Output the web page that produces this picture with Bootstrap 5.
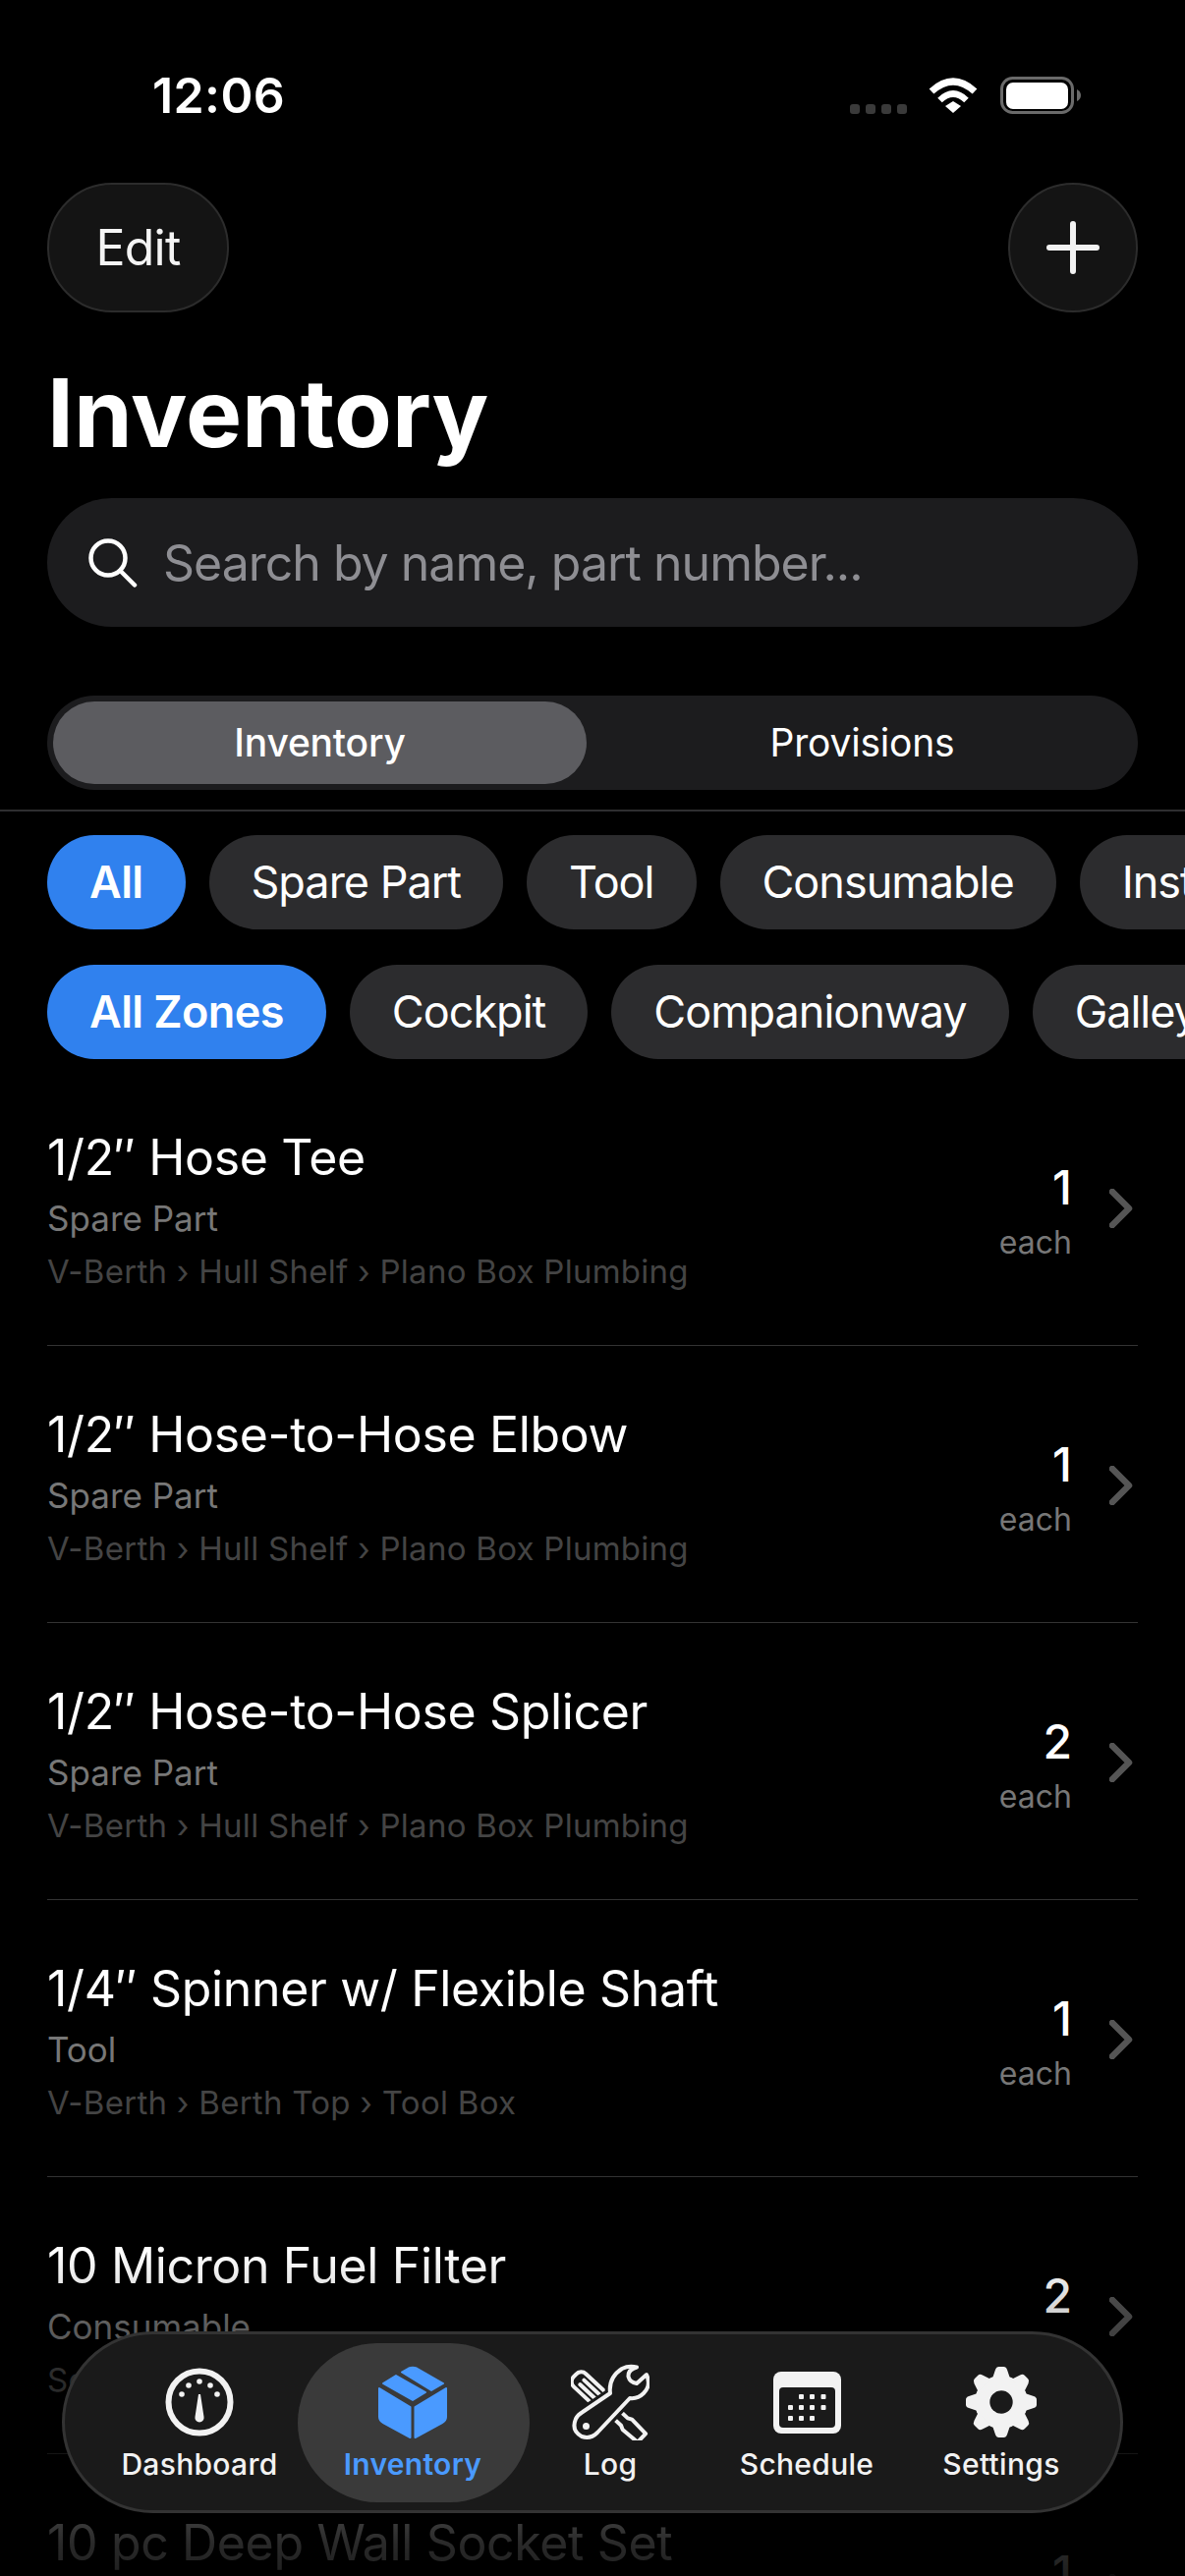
<!DOCTYPE html>
<html lang="en">
<head>
  <meta charset="UTF-8">
  <title>Inventory</title>
  <link href="https://cdn.jsdelivr.net/npm/bootstrap@5.3.0/dist/css/bootstrap.min.css" rel="stylesheet">
  <style>
    html, body { background: #000; margin: 0; }
    body { font-family: Inter, "Liberation Sans", sans-serif; color: #fff; }
    .phone { width: 1206px; height: 2622px; overflow: hidden; position: relative; background: #000; }

    /* status bar */
    .status-row { height: 186px; padding: 68px 106px 0 155px; }
    .status-time { font-size: 50px; font-weight: 600; line-height: 58px; letter-spacing: .4px; }
    .status-icons { padding-top: 10px; }
    .cell-dots { width: 58px; height: 10px; margin: 28px 22px 0 0; }
    .cell-dots span { width: 10px; height: 10px; border-radius: 3px; background: #3a3a3a; }
    .wifi-icon { width: 50px; height: 37px; margin-right: 23px; }
    .battery-icon { width: 82px; height: 38px; }

    /* header */
    .page-pad { padding-left: 48px; padding-right: 48px; }
    .nav-row { height: 132px; }
    .glass-btn { height: 132px; width: 185px; background: #141414; border: 2px solid #2c2c2c; color: #f4f4f4; font-size: 50px; line-height: 1; padding: 0; letter-spacing: -.8px; }
    .glass-btn:hover { background: #141414; color: #f4f4f4; border-color: #2c2c2c; }
    .plus-btn { width: 132px; padding: 0; }
    .plus-btn svg { width: 54px; height: 54px; }
    .page-title { font-size: 96px; font-weight: 700; line-height: 116px; margin: 44px 0 0; color: #fff; }

    .search-box { height: 131px; margin-top: 29px; background: #1c1c1e; padding-left: 42px; }
    .search-box svg { width: 50px; height: 50px; margin-right: 26px; }
    .search-box input { background: transparent; border: 0; outline: 0; padding: 0; width: 900px; color: #fff; font-size: 50px; line-height: 60px; letter-spacing: -1px; }
    .search-box input::placeholder { color: #8e8e93; opacity: 1; }

    .segment { height: 96px; margin-top: 70px; background: #1c1c1e; padding: 6px; }
    .segment-item { height: 84px; font-size: 39px; font-weight: 500; color: #fff; letter-spacing: -.2px; }
    .segment-on { width: 543px; background: #5c5c60; }
    .segment-off { flex: 1; padding-left: 6px; font-weight: 400; }

    .head-line { height: 2px; background: #2e2e30; margin-top: 20px; }

    /* filter chips */
    .chip-row { gap: 24px; margin-left: 48px; white-space: nowrap; overflow: hidden; }
    .chip-row-one { margin-top: 24px; }
    .chip-row-two { margin-top: 36px; }
    .chip { height: 96px; padding: 0 43px; background: #2c2c2e; font-size: 45px; color: #fff; flex: 0 0 auto; letter-spacing: -1px; }
    .chip-on { background: #3081ee; font-weight: 600; letter-spacing: -.6px; }

    /* inventory rows */
    .stock-list { margin-top: 10px; background: transparent; }
    .stock-row { background: transparent; color: #fff; height: 282px; padding: 60px 0 0; border: 0; border-bottom: 3px solid #333; border-radius: 0; }
    .stock-name { font-size: 50px; line-height: 60px; letter-spacing: -.35px; }
    .stock-type { font-size: 35px; line-height: 42px; color: #777; margin-top: 11px; }
    .stock-place { font-size: 33px; line-height: 38px; color: #444; margin-top: 14px; letter-spacing: .27px; }
    .stock-qty { text-align: right; margin-top: 32px; }
    .qty-num { font-size: 48px; line-height: 58px; font-weight: 500; }
    .qty-unit { font-size: 32px; line-height: 40px; color: #777; margin-top: 7px; }
    .chev { width: 24px; height: 40px; margin-left: 38px; margin-right: 5px; margin-top: 62px; }

    /* fade behind the tab bar */
    .bottom-fade { left: 0; right: 0; top: 2250px; bottom: 0; pointer-events: none; background: linear-gradient(to bottom, rgba(0,0,0,0) 0, rgba(0,0,0,0) 40px, rgba(0,0,0,.84) 340px, rgba(0,0,0,.88) 372px); }

    /* tab bar */
    .tab-bar { left: 63px; top: 2373px; width: 1080px; height: 185px; background: #1a1a1a; border: 3px solid #333; padding: 9px 0 0 37px; }
    .tab-item { height: 162px; padding-top: 21px; color: #f2f2f2; font-size: 30px; font-weight: 500; line-height: 36px; letter-spacing: .3px; }
    .tab-on { background: #3a3a3a; color: #4a9aff; font-weight: 600; }
    .tab-dash { width: 200px; }
    .tab-inv { width: 236px; padding-right: 2px; }
    .tab-log { width: 164px; }
    .tab-sched { width: 236px; }
    .tab-set { width: 160px; }
    .tab-icon { height: 78px; margin-bottom: 6px; }
  </style>
</head>
<body>
  <div class="phone">

    <!-- Status bar -->
    <div class="status-row d-flex justify-content-between align-items-start">
      <div class="status-time">12:06</div>
      <div class="status-icons d-flex align-items-start">
        <div class="cell-dots d-flex justify-content-between"><span></span><span></span><span></span><span></span></div>
        <svg class="wifi-icon" viewBox="0 0 50 37">
          <path d="M3 15 Q25 -5 47 15" fill="none" stroke="#fff" stroke-width="7"/>
          <path d="M11.5 24 Q25 11 38.5 24" fill="none" stroke="#fff" stroke-width="6.5"/>
          <path d="M17 30 L25 25 L33 30 L25 37 Z" fill="#fff"/>
        </svg>
        <svg class="battery-icon" viewBox="0 0 82 38">
          <rect x="1.5" y="1.5" width="72" height="35" rx="11" fill="none" stroke="#6a6a6a" stroke-width="3"/>
          <rect x="6" y="6" width="63" height="27" rx="7" fill="#fff"/>
          <path d="M78 13 Q82 15 82 19 Q82 23 78 25 Z" fill="#6a6a6a"/>
        </svg>
      </div>
    </div>

    <div class="page-pad">
      <div class="nav-row d-flex justify-content-between">
        <button class="btn glass-btn rounded-pill">Edit</button>
        <button class="btn glass-btn plus-btn rounded-circle d-flex align-items-center justify-content-center">
          <svg viewBox="0 0 54 54"><path d="M27 3V51M3 27H51" stroke="#f2f2f2" stroke-width="6" stroke-linecap="round"/></svg>
        </button>
      </div>

      <h1 class="page-title">Inventory</h1>

      <div class="search-box rounded-pill d-flex align-items-center">
        <svg viewBox="0 0 50 50" fill="none" stroke="#fff" stroke-width="4.5" stroke-linecap="round">
          <circle cx="20" cy="20" r="17.5"/><path d="M32.5 33 L47 47.5"/>
        </svg>
        <input type="text" placeholder="Search by name, part number...">
      </div>

      <div class="segment rounded-pill d-flex">
        <div class="segment-item segment-on rounded-pill d-flex align-items-center justify-content-center">Inventory</div>
        <div class="segment-item segment-off d-flex align-items-center justify-content-center">Provisions</div>
      </div>
    </div>

    <div class="head-line"></div>

    <!-- Filters -->
    <div class="chip-row chip-row-one d-flex">
      <div class="chip chip-on rounded-pill d-flex align-items-center">All</div>
      <div class="chip rounded-pill d-flex align-items-center">Spare Part</div>
      <div class="chip rounded-pill d-flex align-items-center">Tool</div>
      <div class="chip rounded-pill d-flex align-items-center">Consumable</div>
      <div class="chip rounded-pill d-flex align-items-center">Instrument</div>
    </div>
    <div class="chip-row chip-row-two d-flex">
      <div class="chip chip-on rounded-pill d-flex align-items-center">All Zones</div>
      <div class="chip rounded-pill d-flex align-items-center">Cockpit</div>
      <div class="chip rounded-pill d-flex align-items-center">Companionway</div>
      <div class="chip rounded-pill d-flex align-items-center">Galley</div>
    </div>

    <!-- Inventory list -->
    <div class="page-pad">
      <div class="stock-list list-group list-group-flush">
        <div class="stock-row list-group-item d-flex justify-content-between">
          <div>
            <div class="stock-name">1/2″ Hose Tee</div>
            <div class="stock-type">Spare Part</div>
            <div class="stock-place">V-Berth › Hull Shelf › Plano Box Plumbing</div>
          </div>
          <div class="d-flex align-items-start">
            <div class="stock-qty"><div class="qty-num">1</div><div class="qty-unit">each</div></div>
            <svg class="chev" viewBox="0 0 24 40"><path d="M3 3 L20 20 L3 37" fill="none" stroke="#555" stroke-width="6.5" stroke-linecap="round" stroke-linejoin="round"/></svg>
          </div>
        </div>
        <div class="stock-row list-group-item d-flex justify-content-between">
          <div>
            <div class="stock-name">1/2″ Hose-to-Hose Elbow</div>
            <div class="stock-type">Spare Part</div>
            <div class="stock-place">V-Berth › Hull Shelf › Plano Box Plumbing</div>
          </div>
          <div class="d-flex align-items-start">
            <div class="stock-qty"><div class="qty-num">1</div><div class="qty-unit">each</div></div>
            <svg class="chev" viewBox="0 0 24 40"><path d="M3 3 L20 20 L3 37" fill="none" stroke="#555" stroke-width="6.5" stroke-linecap="round" stroke-linejoin="round"/></svg>
          </div>
        </div>
        <div class="stock-row list-group-item d-flex justify-content-between">
          <div>
            <div class="stock-name">1/2″ Hose-to-Hose Splicer</div>
            <div class="stock-type">Spare Part</div>
            <div class="stock-place">V-Berth › Hull Shelf › Plano Box Plumbing</div>
          </div>
          <div class="d-flex align-items-start">
            <div class="stock-qty"><div class="qty-num">2</div><div class="qty-unit">each</div></div>
            <svg class="chev" viewBox="0 0 24 40"><path d="M3 3 L20 20 L3 37" fill="none" stroke="#555" stroke-width="6.5" stroke-linecap="round" stroke-linejoin="round"/></svg>
          </div>
        </div>
        <div class="stock-row list-group-item d-flex justify-content-between">
          <div>
            <div class="stock-name">1/4″ Spinner w/ Flexible Shaft</div>
            <div class="stock-type">Tool</div>
            <div class="stock-place">V-Berth › Berth Top › Tool Box</div>
          </div>
          <div class="d-flex align-items-start">
            <div class="stock-qty"><div class="qty-num">1</div><div class="qty-unit">each</div></div>
            <svg class="chev" viewBox="0 0 24 40"><path d="M3 3 L20 20 L3 37" fill="none" stroke="#555" stroke-width="6.5" stroke-linecap="round" stroke-linejoin="round"/></svg>
          </div>
        </div>
        <div class="stock-row list-group-item d-flex justify-content-between">
          <div>
            <div class="stock-name">10 Micron Fuel Filter</div>
            <div class="stock-type">Consumable</div>
            <div class="stock-place">Settee Locker</div>
          </div>
          <div class="d-flex align-items-start">
            <div class="stock-qty"><div class="qty-num">2</div><div class="qty-unit">each</div></div>
            <svg class="chev" viewBox="0 0 24 40"><path d="M3 3 L20 20 L3 37" fill="none" stroke="#555" stroke-width="6.5" stroke-linecap="round" stroke-linejoin="round"/></svg>
          </div>
        </div>
        <div class="stock-row list-group-item d-flex justify-content-between">
          <div>
            <div class="stock-name">10 pc Deep Wall Socket Set</div>
          </div>
          <div class="d-flex align-items-start">
            <div class="stock-qty"><div class="qty-num">1</div></div>
            <svg class="chev" viewBox="0 0 24 40"><path d="M3 3 L20 20 L3 37" fill="none" stroke="#555" stroke-width="6.5" stroke-linecap="round" stroke-linejoin="round"/></svg>
          </div>
        </div>
      </div>
    </div>

    <div class="bottom-fade position-absolute"></div>

    <!-- Tab bar -->
    <div class="tab-bar position-absolute rounded-pill d-flex">
      <div class="tab-item tab-dash rounded-pill d-flex flex-column align-items-center">
        <div class="tab-icon d-flex align-items-center">
          <svg width="70" height="70" viewBox="-35 -35 70 70">
            <circle r="31.5" fill="none" stroke="#f2f2f2" stroke-width="6"/>
            <g fill="#f2f2f2">
              <circle cx="-18" cy="-8" r="2.8"/><circle cx="-11" cy="-17" r="2.8"/><circle cx="0" cy="-21" r="2.8"/><circle cx="11" cy="-17" r="2.8"/><circle cx="18" cy="-8" r="2.8"/>
              <path d="M-1 -8 H1 L4.5 15 A4.6 4.6 0 1 1 -4.5 15 Z"/>
            </g>
          </svg>
        </div>
        <div>Dashboard</div>
      </div>
      <div class="tab-item tab-inv tab-on rounded-pill d-flex flex-column align-items-center">
        <div class="tab-icon d-flex align-items-center">
          <svg width="70" height="75" viewBox="0 0 70 75" fill="#4a9aff" stroke="#4a9aff" stroke-width="2" stroke-linejoin="round">
            <path d="M1 23 L32.5 42 V73 L5 58 Q1 56 1 52 Z"/>
            <path d="M69 23 L37.5 42 V73 L65 58 Q69 56 69 52 Z"/>
            <path d="M5 18 L18 10 L48 27 L35 35 Z"/>
            <path d="M24 6.5 L31 2.5 Q35 1 39 2.5 L66 18 L54 25 Z"/>
          </svg>
        </div>
        <div>Inventory</div>
      </div>
      <div class="tab-item tab-log rounded-pill d-flex flex-column align-items-center">
        <div class="tab-icon d-flex align-items-center">
          <svg width="80" height="78" viewBox="0 0 80 78" fill="none" stroke="#f2f2f2" stroke-width="4" stroke-linejoin="round" stroke-linecap="round">
            <g transform="translate(4 12) rotate(43)">
              <rect x="0" y="-9" width="50" height="18" rx="7"/>
              <path d="M10 -3 H32 M10 3 H32"/>
              <path d="M52 -5 H69 L73 -7 L93 -6 V6 L73 7 L69 5 H52"/>
            </g>
            <path d="M67 3.5 Q58 6 58.5 13 Q60 19 67 20 L77 11 Q82 22 74 30 Q68 36 60 35 L27 70 Q20 77 11 74 Q0 68 5 56 Q7 52 12 49 L40 30 Q38 14 52 5 Q59 1.5 67 3.5 Z" fill="#1a1a1a" stroke="#1a1a1a" stroke-width="10"/>
            <path d="M67 3.5 Q58 6 58.5 13 Q60 19 67 20 L77 11 Q82 22 74 30 Q68 36 60 35 L27 70 Q20 77 11 74 Q0 68 5 56 Q7 52 12 49 L40 30 Q38 14 52 5 Q59 1.5 67 3.5 Z" fill="#1a1a1a"/>
            <circle cx="15.5" cy="63.5" r="2.5" fill="#f2f2f2" stroke-width="2"/>
          </svg>
        </div>
        <div>Log</div>
      </div>
      <div class="tab-item tab-sched rounded-pill d-flex flex-column align-items-center">
        <div class="tab-icon d-flex align-items-center">
          <svg width="69" height="63" viewBox="0 0 69 63">
            <rect width="69" height="63" rx="8" fill="#f2f2f2"/>
            <rect x="6" y="16" width="57" height="41" rx="4" fill="#1a1a1a"/>
            <g fill="#f2f2f2">
              <rect x="26" y="23" width="5" height="5" rx="1"/><rect x="37" y="23" width="5" height="5" rx="1"/><rect x="48.500" y="23" width="5" height="5" rx="1"/>
              <rect x="15" y="34" width="5" height="5" rx="1"/><rect x="26" y="34" width="5" height="5" rx="1"/><rect x="37" y="34" width="5" height="5" rx="1"/><rect x="48.500" y="34" width="5" height="5" rx="1"/>
              <rect x="15" y="45" width="5" height="5" rx="1"/><rect x="26" y="45" width="5" height="5" rx="1"/><rect x="37" y="45" width="5" height="5" rx="1"/>
            </g>
          </svg>
        </div>
        <div>Schedule</div>
      </div>
      <div class="tab-item tab-set rounded-pill d-flex flex-column align-items-center">
        <div class="tab-icon d-flex align-items-center">
          <svg width="72" height="72" viewBox="-36 -36 72 72">
            <defs><path id="gearTooth" d="M-9 -24 L-6 -33 Q-5 -36 -2.500 -36 H2.500 Q5 -36 6 -33 L9 -24 Z"/></defs>
            <g fill="#f2f2f2">
              <circle r="27"/>
              <use href="#gearTooth"/><use href="#gearTooth" transform="rotate(45)"/><use href="#gearTooth" transform="rotate(90)"/><use href="#gearTooth" transform="rotate(135)"/>
              <use href="#gearTooth" transform="rotate(180)"/><use href="#gearTooth" transform="rotate(225)"/><use href="#gearTooth" transform="rotate(270)"/><use href="#gearTooth" transform="rotate(315)"/>
            </g>
            <circle r="11.700" fill="#1a1a1a"/>
          </svg>
        </div>
        <div>Settings</div>
      </div>
    </div>

  </div>
  <script src="https://cdn.jsdelivr.net/npm/bootstrap@5.3.0/dist/js/bootstrap.bundle.min.js"></script>
</body>
</html>
